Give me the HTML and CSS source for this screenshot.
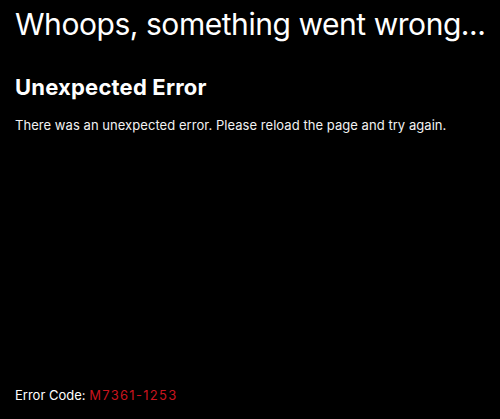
FILE: index.html
```html
<!DOCTYPE html>
<html lang="en">
<head>
<meta charset="utf-8">
<title>Error</title>
<link rel="stylesheet" href="styles.css">
</head>
<body>
<main class="page">
  <div class="content">
    <h1 class="title">Whoops, something went wrong...</h1>
    <h2 class="subtitle">Unexpected Error</h2>
    <p class="message">There was an unexpected error. Please reload the page and try again.</p>
  </div>
  <p class="code">Error Code: <span class="code-value">M7361-1253</span></p>
</main>
</body>
</html>
```
FILE: styles.css
```css
html, body {
  margin: 0;
  padding: 0;
  background: #000;
  height: 100%;
}

.page {
  box-sizing: border-box;
  height: 419px;
  padding: 0 15px;
  display: flex;
  flex-direction: column;
  justify-content: space-between;
  font-family: Inter, "Liberation Sans", sans-serif;
  color: #fff;
}

.title {
  margin: 6px 0 0;
  font-size: 30px;
  font-weight: 400;
  line-height: 36px;
  letter-spacing: -0.45px;
  white-space: nowrap;
}

.subtitle {
  margin: 32px 0 0;
  font-size: 22px;
  font-weight: 700;
  line-height: 26px;
  letter-spacing: 0.2px;
}

.message {
  margin: 16px 0 0;
  font-size: 13px;
  line-height: 18px;
  letter-spacing: 0.05px;
  color: #f2f2f2;
}

.code {
  margin: 0 0 15px;
  font-size: 13px;
  line-height: 18px;
}

.code-value {
  color: #c8141e;
  letter-spacing: 1.3px;
}
```
